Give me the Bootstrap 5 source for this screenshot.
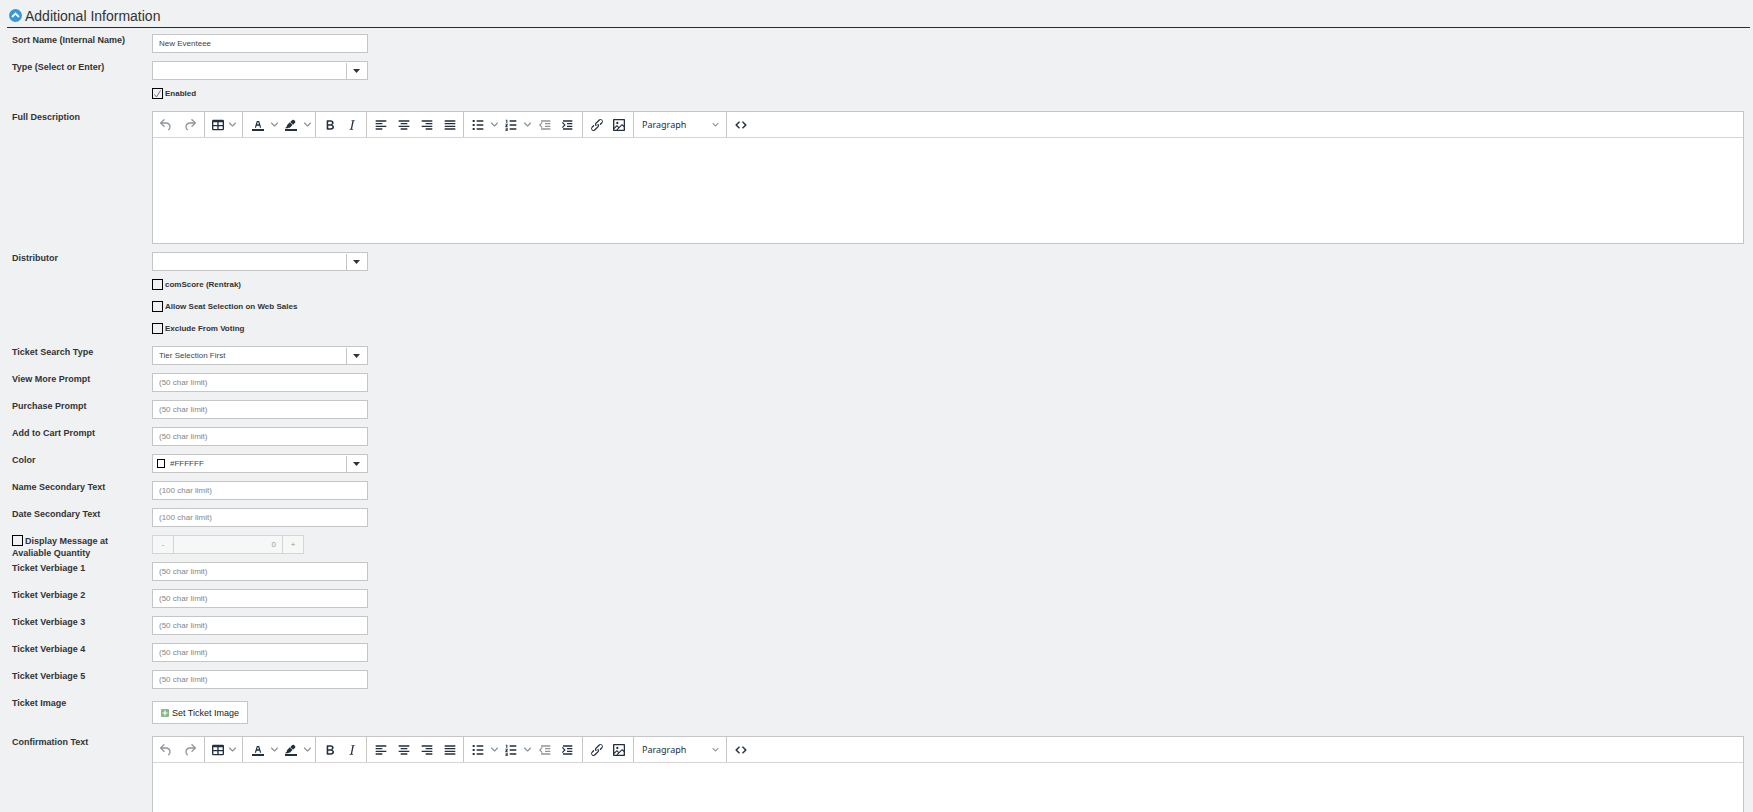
<!DOCTYPE html>
<html lang="en">
<head>
<meta charset="utf-8">
<meta name="viewport" content="width=device-width, initial-scale=1">
<title>Additional Information</title>
<link href="https://cdn.jsdelivr.net/npm/bootstrap@5.3.0/dist/css/bootstrap.min.css" rel="stylesheet">
<style>
body{background:#eff1f3;font-family:"Liberation Sans",Arial,sans-serif;font-size:9px;line-height:12px;color:#333}
.page{padding:4px 3px 0 7px}
.section-head{height:24px;border-bottom:1px solid #222f3e;padding-left:2px;gap:3px}
.section-head h1{font-size:14px;line-height:18px}
.toggle{width:13px;height:13px}
.rows{padding:6px 6px 0 5px}
.field{display:grid;grid-template-columns:140px minmax(0,1fr);margin-bottom:8px}
.field>label,.field>.caption{font-weight:700;padding-right:24px}
.field.tall{margin-bottom:3px}
.ctl{width:216px;height:19px;border:1px solid #c5c5c5;border-radius:0;background-color:#fff;font-size:8px;line-height:12px;padding:0 6px;color:#444;display:block}
.ctl::placeholder{color:#868686;opacity:1}
select.ctl{appearance:none;background-repeat:no-repeat;background-image:url("data:image/svg+xml,%3Csvg xmlns='http://www.w3.org/2000/svg' viewBox='0 0 21 17'%3E%3Cpath d='M0 1h1v16H0z' fill='%23c5c5c5'/%3E%3Cpath d='M7 7h7l-3.500 4z' fill='%23333'/%3E%3C/svg%3E");background-size:21px 17px;background-position:right 0 top 0}
.color-wrap{width:216px}
.color-wrap .ctl{padding-left:17px}
.swatch{left:5px;top:5px;width:8px;height:9px;border:1px solid #000;background:#fff}
.tick{appearance:none;width:11px;height:11px;border:1px solid #000;border-radius:0;background:transparent;margin:0;flex:none}
.tick:checked{background:url("data:image/svg+xml,%3Csvg xmlns='http://www.w3.org/2000/svg' viewBox='0 0 9 9'%3E%3Cpath d='M1.500 5.500l2 2.500L7.500 1.500' fill='none' stroke='%23777'/%3E%3C/svg%3E")}
.ticks{margin-left:140px;padding-bottom:1px}
.ticks>div{height:22px;gap:2px}
.ticks label{font-size:8px;line-height:11px;font-weight:700}
.inline-tick{display:inline-block;vertical-align:top;margin-right:2px}
.stepper{width:152px;height:19px;border:1px solid #d3d5d6;background:#f6f8f8}
.stepper button{width:20px;flex:none;border:0;background:transparent;color:#999;font-size:8px;padding:0}
.stepper input{border:solid #d3d5d6;border-width:0 1px;background:transparent;color:#999;text-align:right;font-size:8px;padding:0 6px;min-width:0;border-radius:0}
.set-btn{margin:4px 0;height:23px;border:1px solid #c5c5c5;border-radius:0;background:#fff;font-size:9px;line-height:12px;padding:0 8px;gap:3px;color:#222}
.editor{border:1px solid #c5c5c5;background:#fff}
.toolbar{height:26px;border-bottom:1px solid #d5d5d5}
.toolbar .grp{border-right:1px solid #c5c5c5;display:flex;align-items:center;justify-content:center}
.toolbar .grp:last-child{border-right:0}
.toolbar button{border:0;background:transparent;padding:0;height:24px;color:#222f3e;display:flex;align-items:center;justify-content:center;flex:none}
.toolbar svg{width:16px;height:16px;fill:currentColor}
.toolbar button:disabled{opacity:.5}
.w-a{width:20px}.w-b{width:22px}.w-c{width:23px}.w-d{width:24px}
.more{width:13px}
.tight .more{width:8px}
.toolbar .more svg{width:7px;height:7px;opacity:.55}
.g-history{width:52px;padding-right:1px}.g-table{width:38px;padding-right:3px}.g-color{width:73px;padding-left:3px}.g-style{width:51px}.g-align{width:97px}.g-list{width:119px}.g-format{width:93px}.g-code{width:28px}
.format{appearance:none;width:92px;height:24px;border:0;font-family:"Noto Sans","Open Sans",sans-serif;font-size:9px;color:#222f3e;padding:0 8px;background:url("data:image/svg+xml,%3Csvg xmlns='http://www.w3.org/2000/svg' viewBox='0 0 10 10'%3E%3Cpath d='M1 3l4 4 4-4' fill='none' stroke='%23909396' stroke-width='1.500'/%3E%3C/svg%3E") no-repeat right 7px center/7px 7px}
.editor textarea{display:block;width:100%;height:105px;border:0;resize:none;padding:8px;outline:0;font-size:10px}
</style>
</head>
<body>
<svg class="d-none" xmlns="http://www.w3.org/2000/svg">
<symbol id="undo" viewBox="0 0 24 24"><path d="M6.400 8H12c3.700 0 6.200 2 6.800 5.100.6 2.700-.4 5.600-2.300 6.800a1 1 0 01-1-1.800c1.100-.6 1.800-2.700 1.400-4.600-.5-2.100-2.100-3.500-4.900-3.500H6.400l3.300 3.300a1 1 0 11-1.400 1.400l-5-5a1 1 0 010-1.400l5-5a1 1 0 011.400 1.400L6.400 8z"/></symbol>
<symbol id="redo" viewBox="0 0 24 24"><path d="M17.600 10H12c-2.800 0-4.400 1.400-4.900 3.500-.4 2 .3 4 1.400 4.600a1 1 0 11-1 1.800c-2-1.200-2.900-4.100-2.300-6.800.6-3 3-5.100 6.800-5.100h5.600l-3.300-3.300a1 1 0 111.400-1.400l5 5a1 1 0 010 1.400l-5 5a1 1 0 01-1.400-1.400l3.300-3.300z"/></symbol>
<symbol id="grid" viewBox="0 0 24 24"><path fill-rule="evenodd" d="M19 4a2 2 0 012 2v12a2 2 0 01-2 2H5a2 2 0 01-2-2V6c0-1.100.9-2 2-2h14zM5 14v4h6v-4H5zm14 0h-6v4h6v-4zm0-6h-6v4h6V8zM5 12h6V8H5v4z"/></symbol>
<symbol id="forecolor" viewBox="0 0 24 24"><path fill-rule="evenodd" d="M3 18h18v3H3zM8.700 16h-.8a.5.5 0 01-.5-.6l2.700-9c.1-.3.3-.4.5-.4h2.800c.2 0 .4.1.5.4l2.700 9a.5.5 0 01-.5.6h-.8a.5.5 0 01-.4-.4l-.7-2.200c0-.3-.3-.4-.5-.4h-3.400c-.2 0-.4.1-.5.4l-.7 2.200c0 .3-.2.4-.4.4zm2.600-7.600l-.6 2a.5.5 0 00.5.6h1.600a.5.5 0 00.5-.6l-.6-2c0-.3-.3-.4-.5-.4h-.4c-.2 0-.4.1-.5.4z"/></symbol>
<symbol id="backcolor" viewBox="0 0 24 24"><path d="M3 18h18v3H3zM7.700 16.700H3l3.300-3.300-.7-.8L10.200 8l4 4.100-4 4.200c-.2.200-.6.200-.8 0l-.6-.7-1.100 1.100zm5-7.500L11 7.400l3-2.900a2 2 0 012.600 0L18 6c.7.7.7 2 0 2.700l-2.900 2.900-1.800-1.800-.5-.6"/></symbol>
<symbol id="bold" viewBox="0 0 24 24"><path fill-rule="evenodd" d="M7.800 19c-.3 0-.5 0-.6-.2l-.2-.5V5.700c0-.2 0-.4.2-.5l.6-.2h5c1.500 0 2.700.3 3.500 1 .7.6 1.100 1.400 1.100 2.500a3 3 0 01-.6 1.900c-.4.6-1 1-1.600 1.200.4.1.9.3 1.300.6s.8.7 1 1.200c.4.400.5 1 .5 1.600 0 1.300-.4 2.300-1.300 3-.8.7-2.100 1-3.800 1H7.800zm5-8.300c.6 0 1.200-.1 1.600-.5.4-.3.6-.7.6-1.300 0-1.100-.8-1.700-2.300-1.700H9.300v3.500h3.400zm.5 6c.7 0 1.300-.1 1.700-.4.4-.4.6-.9.6-1.500s-.2-1-.7-1.400c-.4-.3-1-.4-2-.4H9.400v3.800h4z"/></symbol>
<symbol id="italic" viewBox="0 0 24 24"><path d="M16.700 4.700l-.1.900h-.3c-.6 0-1 0-1.400.3-.3.3-.4.6-.5 1.100l-2.100 9.800v.6c0 .5.4.8 1.400.8h.2l-.2.8H8l.2-.8h.2c1.100 0 1.800-.5 2-1.500l2-9.800.1-.5c0-.6-.4-.8-1.400-.8h-.3l.2-.9h5.800z"/></symbol>
<symbol id="left" viewBox="0 0 24 24"><path d="M4 5h16v2H4zM4 9h10v2H4zM4 13h16v2H4zM4 17h10v2H4z"/></symbol>
<symbol id="center" viewBox="0 0 24 24"><path d="M4 5h16v2H4zM7 9h10v2H7zM4 13h16v2H4zM7 17h10v2H7z"/></symbol>
<symbol id="right" viewBox="0 0 24 24"><path d="M4 5h16v2H4zM10 9h10v2H10zM4 13h16v2H4zM10 17h10v2H10z"/></symbol>
<symbol id="justify" viewBox="0 0 24 24"><path d="M4 5h16v2H4zM4 9h16v2H4zM4 13h16v2H4zM4 17h16v2H4z"/></symbol>
<symbol id="bullets" viewBox="0 0 24 24"><path d="M10 5h10v2H10zM10 11h10v2H10zM10 17h10v2H10zM4 4.500h3v3H4zM4 10.500h3v3H4zM4 16.500h3v3H4z"/></symbol>
<symbol id="numbers" viewBox="0 0 24 24"><path d="M10 5h10v2H10zM10 11h10v2H10zM10 17h10v2H10zM4 4h2.500v5H5V5.200H4zM3.500 10h3.500v2.200l-1.700 1.500H7V15H3.500v-1.600l1.900-2.100H3.500zM3.500 16H7v5H3.500v-1.200h2v-.8H4v-1h1.500v-.8h-2z"/></symbol>
<symbol id="outdent" viewBox="0 0 24 24"><path d="M6 5h14v2H6zM12 9h8v2h-8zM12 13h8v2h-8zM6 17h14v2H6zM8.600 8.800L5.500 12l3.100 3.200-1.300 1.300L3 12l4.300-4.500z"/></symbol>
<symbol id="indent" viewBox="0 0 24 24"><path d="M6 5h14v2H6zM12 9h8v2h-8zM12 13h8v2h-8zM6 17h14v2H6zM4.400 8.800L7.500 12l-3.100 3.200 1.300 1.300L10 12 5.700 7.500z"/></symbol>
<symbol id="link" viewBox="0 0 24 24"><path d="M6.200 12.300a1 1 0 011.400 1.400l-2.100 2a2 2 0 102.700 2.800l4.800-4.800a1 1 0 000-1.400 1 1 0 111.400-1.300 2.900 2.900 0 010 4L9.600 20a3.900 3.900 0 01-5.500-5.500l2-2zm11.600-.6a1 1 0 01-1.400-1.400l2-2a2 2 0 10-2.600-2.800L11 10.300a1 1 0 000 1.400A1 1 0 119.600 13a2.900 2.900 0 010-4L14.400 4a3.900 3.900 0 015.500 5.500l-2 2z"/></symbol>
<symbol id="picture" viewBox="0 0 24 24"><path fill-rule="evenodd" d="M5 15.700l3.300-3.200c.3-.3.7-.3 1 0L12 15l4.100-4c.3-.4.8-.4 1 0l2 1.900V5H5v10.700zM5 18v1h3l2.800-2.900-2-2L5 17.900zm14-3l-2.500-2.400-6.400 6.500H19v-4zM4 3h16c.6 0 1 .4 1 1v16c0 .6-.4 1-1 1H4a1 1 0 01-1-1V4c0-.6.4-1 1-1z"/><circle cx="9.500" cy="9" r="1.700"/></symbol>
<symbol id="code" viewBox="0 0 24 24"><path stroke="currentColor" stroke-width=".6" d="M9.800 15.700c.3.300.3.800 0 1-.3.400-.9.400-1.200 0l-4.400-4.100a.8.8 0 010-1.200l4.400-4.200c.3-.3.900-.3 1.200 0 .3.300.3.800 0 1.100L6 12l3.800 3.700zM14.200 15.700c-.3.300-.3.800 0 1 .4.400.9.400 1.200 0l4.400-4.100c.3-.3.3-.8 0-1.200l-4.400-4.200a.8.8 0 00-1.200 0c-.3.300-.3.800 0 1.100L18 12l-3.800 3.700z"/></symbol>
<symbol id="chev" viewBox="0 0 10 10"><path d="M8.700 2.200c.3-.3.800-.3 1 0 .4.400.4.900 0 1.200L5.700 7.800c-.3.300-.9.300-1.200 0L.2 3.400a.8.8 0 010-1.200c.3-.3.8-.3 1.100 0L5 6l3.700-3.800z"/></symbol>
</svg>

<template id="toolbar">
<div class="grp g-history"><button type="button" class="w-d" disabled aria-label="Undo"><svg><use href="#undo"/></svg></button><button type="button" class="w-d" disabled aria-label="Redo"><svg><use href="#redo"/></svg></button></div>
<div class="grp g-table tight"><button type="button" class="w-a" aria-label="Table"><svg><use href="#grid"/></svg></button><button type="button" class="more" aria-label="Table menu"><svg><use href="#chev"/></svg></button></div>
<div class="grp g-color"><button type="button" class="w-a" aria-label="Text color"><svg><use href="#forecolor"/></svg></button><button type="button" class="more" aria-label="Text color menu"><svg><use href="#chev"/></svg></button><button type="button" class="w-a" aria-label="Background color"><svg><use href="#backcolor"/></svg></button><button type="button" class="more" aria-label="Background color menu"><svg><use href="#chev"/></svg></button></div>
<div class="grp g-style"><button type="button" class="w-b" aria-label="Bold"><svg><use href="#bold"/></svg></button><button type="button" class="w-b" aria-label="Italic"><svg><use href="#italic"/></svg></button></div>
<div class="grp g-align"><button type="button" class="w-c" aria-label="Align left"><svg><use href="#left"/></svg></button><button type="button" class="w-c" aria-label="Align center"><svg><use href="#center"/></svg></button><button type="button" class="w-c" aria-label="Align right"><svg><use href="#right"/></svg></button><button type="button" class="w-c" aria-label="Justify"><svg><use href="#justify"/></svg></button></div>
<div class="grp g-list"><button type="button" class="w-a" aria-label="Bullet list"><svg><use href="#bullets"/></svg></button><button type="button" class="more" aria-label="Bullet list menu"><svg><use href="#chev"/></svg></button><button type="button" class="w-a" aria-label="Numbered list"><svg><use href="#numbers"/></svg></button><button type="button" class="more" aria-label="Numbered list menu"><svg><use href="#chev"/></svg></button><button type="button" class="w-b" disabled aria-label="Decrease indent"><svg><use href="#outdent"/></svg></button><button type="button" class="w-b" aria-label="Increase indent"><svg><use href="#indent"/></svg></button></div>
<div class="grp g-style"><button type="button" class="w-b" aria-label="Link"><svg><use href="#link"/></svg></button><button type="button" class="w-b" aria-label="Image"><svg><use href="#picture"/></svg></button></div>
<div class="grp g-format"><select class="format" aria-label="Block format"><option>Paragraph</option><option>Heading 1</option></select></div>
<div class="grp g-code"><button type="button" class="w-d" aria-label="Source code"><svg><use href="#code"/></svg></button></div>
</template>

<main class="page vh-100 overflow-hidden">
<header class="section-head d-flex align-items-center">
<svg class="toggle" viewBox="0 0 13 13"><circle cx="6.500" cy="6.500" r="6.500" fill="#3598db"/><path d="M3 8l3.500-3.500L10 8" fill="none" stroke="#fff" stroke-width="1.800"/></svg>
<h1 class="m-0 fw-normal">Additional Information</h1>
</header>
<form class="rows">
<div class="field"><label for="sort">Sort Name (Internal Name)</label><input class="ctl" id="sort" value="New Eventeee"></div>
<div class="field"><label for="type">Type (Select or Enter)</label><select class="ctl" id="type"><option></option></select></div>
<div class="ticks"><div class="d-flex"><input type="checkbox" class="tick" id="enabled" checked><label for="enabled">Enabled</label></div></div>
<div class="field"><label for="full">Full Description</label><div class="editor"><div class="toolbar d-flex" role="toolbar"></div><textarea id="full"></textarea></div></div>
<div class="field"><label for="dist">Distributor</label><select class="ctl" id="dist"><option></option></select></div>
<div class="ticks">
<div class="d-flex"><input type="checkbox" class="tick" id="com"><label for="com">comScore (Rentrak)</label></div>
<div class="d-flex"><input type="checkbox" class="tick" id="seat"><label for="seat">Allow Seat Selection on Web Sales</label></div>
<div class="d-flex"><input type="checkbox" class="tick" id="vote"><label for="vote">Exclude From Voting</label></div>
</div>
<div class="field"><label for="search">Ticket Search Type</label><select class="ctl" id="search"><option>Tier Selection First</option></select></div>
<div class="field"><label for="view">View More Prompt</label><input class="ctl" id="view" placeholder="(50 char limit)" maxlength="50"></div>
<div class="field"><label for="buy">Purchase Prompt</label><input class="ctl" id="buy" placeholder="(50 char limit)" maxlength="50"></div>
<div class="field"><label for="cart">Add to Cart Prompt</label><input class="ctl" id="cart" placeholder="(50 char limit)" maxlength="50"></div>
<div class="field"><label for="color">Color</label><div class="color-wrap position-relative"><select class="ctl" id="color"><option>#FFFFFF</option></select><span class="swatch position-absolute"></span></div></div>
<div class="field"><label for="name2">Name Secondary Text</label><input class="ctl" id="name2" placeholder="(100 char limit)" maxlength="100"></div>
<div class="field"><label for="date2">Date Secondary Text</label><input class="ctl" id="date2" placeholder="(100 char limit)" maxlength="100"></div>
<div class="field tall"><label for="msg"><input type="checkbox" class="tick inline-tick" id="msg">Display Message at Avaliable Quantity</label><div class="stepper d-flex"><button type="button" disabled>-</button><input class="flex-grow-1" value="0" aria-label="Quantity" disabled><button type="button" disabled>+</button></div></div>
<div class="field"><label for="v1">Ticket Verbiage 1</label><input class="ctl" id="v1" placeholder="(50 char limit)" maxlength="50"></div>
<div class="field"><label for="v2">Ticket Verbiage 2</label><input class="ctl" id="v2" placeholder="(50 char limit)" maxlength="50"></div>
<div class="field"><label for="v3">Ticket Verbiage 3</label><input class="ctl" id="v3" placeholder="(50 char limit)" maxlength="50"></div>
<div class="field"><label for="v4">Ticket Verbiage 4</label><input class="ctl" id="v4" placeholder="(50 char limit)" maxlength="50"></div>
<div class="field"><label for="v5">Ticket Verbiage 5</label><input class="ctl" id="v5" placeholder="(50 char limit)" maxlength="50"></div>
<div class="field"><span class="caption">Ticket Image</span><div><button type="button" class="set-btn d-flex align-items-center"><svg width="8" height="8" viewBox="0 0 8 8"><rect width="8" height="8" rx="1" fill="#86b98a"/><path d="M4 1.500v5M1.500 4h5" stroke="#fff" stroke-width="1.200"/></svg>Set Ticket Image</button></div></div>
<div class="field"><label for="confirm">Confirmation Text</label><div class="editor"><div class="toolbar d-flex" role="toolbar"></div><textarea id="confirm"></textarea></div></div>
</form>
</main>
<script>
document.querySelectorAll('.toolbar').forEach(function (bar) {
  bar.append(document.getElementById('toolbar').content.cloneNode(true));
});
</script>
<script src="https://cdn.jsdelivr.net/npm/bootstrap@5.3.0/dist/js/bootstrap.bundle.min.js"></script>
</body>
</html>
